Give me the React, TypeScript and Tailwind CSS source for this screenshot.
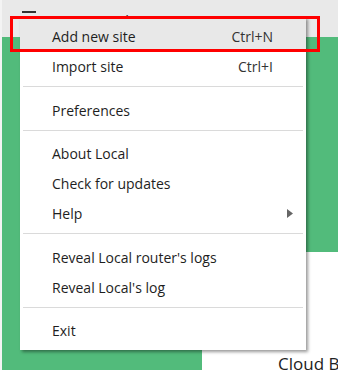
import React from "react";

type Entry = { label: string; shortcut?: string; submenu?: boolean; active?: boolean } | "sep" | "sep2";

const entries: Entry[] = [
  { label: "Add new site", shortcut: "Ctrl+N", active: true },
  { label: "Import site", shortcut: "Ctrl+I" },
  "sep",
  { label: "Preferences" },
  "sep2",
  { label: "About Local" },
  { label: "Check for updates" },
  { label: "Help", submenu: true },
  "sep",
  { label: "Reveal Local router's logs" },
  { label: "Reveal Local's log" },
  "sep2",
  { label: "Exit" },
];

export default function App() {
  return (
    <div
      className="relative w-[352px] h-[370px] overflow-hidden bg-white"
      style={{ fontFamily: '"Open Sans", "Noto Sans", sans-serif' }}
    >
      {/* app window behind the menu */}
      <div className="flex flex-col w-[338px] h-full pl-[2px] bg-[#f4f4f4] overflow-hidden">
        <div className="flex items-start shrink-0 h-[37px] bg-[#e9e9e9] pt-[11px] pl-[20px] gap-[57px]">
          <div className="flex flex-col gap-[4px] w-[14px]">
            <div className="h-[2px] bg-[#333]" />
            <div className="h-[2px] bg-[#333]" />
            <div className="h-[2px] bg-[#333]" />
          </div>
          <span className="text-[15px] leading-none text-[#333] mt-[2px]">Local</span>
        </div>
        <div className="shrink-0 h-[215px] bg-[#52bb7b]" />
        <div className="flex flex-1 min-h-0">
          <div className="shrink-0 w-[200px] bg-[#52bb7b]" />
          <div className="flex-1 min-w-0 bg-white pt-[99px] pl-[76px] overflow-hidden">
            <span className="text-[17px] text-[#222] whitespace-nowrap">Cloud Backups</span>
          </div>
        </div>
      </div>

      {/* dropdown menu */}
      <div className="absolute left-[20px] top-[17px] w-[286px] h-[333px] bg-white shadow-[2px_2px_3px_rgba(0,0,0,0.4)]">
        {entries.map((e, i) =>
          e === "sep" || e === "sep2" ? (
            <div key={i} className={`${e === "sep" ? "h-[14px]" : "h-[13px]"} pt-[5px] px-[3px]`}>
              <div className="h-px bg-[#dadada]" />
            </div>
          ) : (
            <div
              key={i}
              className={`flex items-center justify-between pl-[32px] pr-[33px] text-[14px] text-[#1e1e1e] ${
                e.active ? "h-[34px] pt-[4px] bg-[#e8e8e8]" : "h-[30px]"
              }`}
            >
              <span>{e.label}</span>
              {e.shortcut && <span className="text-[#333]">{e.shortcut}</span>}
              {e.submenu && (
                <svg width="6" height="9" viewBox="0 0 6 9" className="-mr-[20px]">
                  <path d="M0 0 L6 4.5 L0 9 Z" fill="#666" />
                </svg>
              )}
            </div>
          )
        )}
      </div>

      {/* annotation box */}
      <div className="absolute left-[10px] top-[16px] w-[310px] h-[36px] border-[3px] border-[#ff0000]" />
    </div>
  );
}
